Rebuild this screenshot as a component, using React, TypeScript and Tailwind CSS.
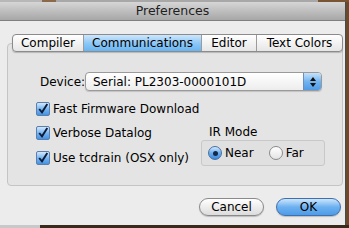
import React from 'react';

const font = { fontFamily: '"DejaVu Sans", "Liberation Sans", sans-serif' };

function Check({ label, className = '' }: { label: string; className?: string }) {
  return (
    <div className={'flex items-center gap-[3px] h-[16px] whitespace-nowrap ' + className}>
      <div className="w-[14px] h-[14px] rounded-[2px] border border-[#5a7fae] bg-gradient-to-b from-[#d2e8fc] via-[#78b6f0] to-[#4592e2] flex items-center justify-center">
        <svg width="12" height="12" viewBox="0 0 12 12">
          <path d="M2.2 6 L5 9.3 L10.3 1" fill="none" stroke="#0e1c38" strokeWidth="1.9" />
        </svg>
      </div>
      <span className="text-[12px] text-black">{label}</span>
    </div>
  );
}

function Radio({ label, on }: { label: string; on?: boolean }) {
  return (
    <div className="flex items-center gap-[3px] whitespace-nowrap">
      <div
        className={
          on
            ? 'w-[14px] h-[14px] rounded-full border border-[#4a6f9e] bg-gradient-to-b from-[#d2e8fc] via-[#6aaeee] to-[#3a8ae0] flex items-center justify-center'
            : 'w-[14px] h-[14px] rounded-full border border-[#8a8a8a] bg-gradient-to-b from-[#ffffff] to-[#e4e4e4]'
        }
      >
        {on && <div className="w-[5px] h-[5px] rounded-full bg-[#152a4a]" />}
      </div>
      <span className="text-[12px] text-black">{label}</span>
    </div>
  );
}

export default function App() {
  const tabs = [
    { name: 'Compiler', w: 'w-[70px]' },
    { name: 'Communications', w: 'w-[118px]' },
    { name: 'Editor', w: 'w-[55px]' },
    { name: 'Text Colors', w: 'w-[86px]' },
  ];
  return (
    <div className="w-[349px] h-[228px] overflow-hidden bg-[#6b4a2c] flex flex-col" style={font}>
      <div className="h-[2px] flex">
        <div className="w-[42px] bg-[#b8b8b8]" />
        <div className="w-[14px] bg-[#8a6a48]" />
        <div className="w-[262px] bg-[#a8a8a8]" />
        <div className="flex-1 bg-[#7a5534]" />
      </div>
      <div className="w-[346px] h-[223px] bg-[#ececec] flex flex-col border-r border-[#4a4a4a]">
        <div className="h-[19px] bg-gradient-to-b from-[#d6d6d6] to-[#a7a7a7] border-b border-[#7f7f7f] flex items-center justify-center">
          <span className="text-[12.5px] text-[#1e1e1e]">Preferences</span>
        </div>
        <div className="relative flex-1 pl-[7px] pr-[2px] pt-[22px]">
          <div className="h-[143px] rounded-[4px] border border-[#c4c4c4] bg-[#e4e4e4] flex flex-col">
            <div className="h-[28px] shrink-0" />
            <div className="flex items-center pl-[32px] h-[19px]">
              <span className="text-[12px] text-black w-[45px]">Device:</span>
              <div className="w-[237px] h-[19px] rounded-[4px] border border-[#9a9a9a] bg-gradient-to-b from-[#ffffff] to-[#ededed] flex items-center justify-between pl-[7px] shadow-[0_1px_1px_rgba(0,0,0,0.15)] overflow-hidden">
                <span className="text-[12px] text-black">Serial: PL2303-0000101D</span>
                <div className="w-[18px] h-[19px] bg-gradient-to-b from-[#d0e7fb] via-[#72b4f0] to-[#4a98e6] border-l border-[#6a8fbd] flex flex-col items-center justify-center gap-[2px]">
                  <svg width="6" height="4" viewBox="0 0 6 4"><path d="M0 4 L3 0 L6 4 Z" fill="#111" /></svg>
                  <svg width="6" height="4" viewBox="0 0 6 4"><path d="M0 0 L3 4 L6 0 Z" fill="#111" /></svg>
                </div>
              </div>
            </div>
            <div className="flex pl-[28px] pt-[10px]">
              <div className="w-[165px] flex flex-col">
                <Check label="Fast Firmware Download" />
                <Check label="Verbose Datalog" className="mt-[8px]" />
                <Check label="Use tcdrain (OSX only)" className="mt-[9px]" />
              </div>
              <div className="pt-[23px] flex flex-col">
                <span className="text-[12px] text-black ml-[8px] h-[16px] leading-[16px]">IR Mode</span>
                <div className="w-[124px] h-[26px] rounded-[3px] border border-[#c8c8c8] bg-[#e0e0e0] flex items-center pl-[6px] gap-[15px]">
                  <Radio label="Near" on />
                  <Radio label="Far" />
                </div>
              </div>
            </div>
          </div>
          <div className="absolute left-[12px] top-[13px] flex h-[18px] rounded-[4px] border border-[#8b8b8b] overflow-hidden bg-gradient-to-b from-[#ffffff] to-[#e6e6e6] shadow-[0_1px_1px_rgba(0,0,0,0.2)]">
            {tabs.map((t, i) => (
              <div
                key={t.name}
                className={
                  (i === 1
                    ? 'bg-gradient-to-b from-[#cde6fb] via-[#8fc8f6] to-[#66b4f2] '
                    : '') +
                  t.w +
                  (i > 0 ? ' border-l border-[#9b9b9b]' : '') +
                  ' flex items-center justify-center text-[12px] text-black whitespace-nowrap'
                }
              >
                {t.name}
              </div>
            ))}
          </div>
          <div className="flex justify-end gap-[12px] pr-[2px] pt-[12px]">
            <div className="w-[65px] h-[18px] rounded-full border border-[#8a8a8a] bg-gradient-to-b from-[#ffffff] to-[#dcdcdc] flex items-center justify-center text-[12px] text-black shadow-[0_1px_1px_rgba(0,0,0,0.2)]">
              Cancel
            </div>
            <div className="w-[65px] h-[18px] rounded-full border border-[#3f6fae] bg-gradient-to-b from-[#cde6fb] via-[#6cb0f0] to-[#4d9ce8] flex items-center justify-center text-[12px] text-black shadow-[0_1px_1px_rgba(0,0,0,0.2)]">
              OK
            </div>
          </div>
        </div>
      </div>
      <div className="flex-1 flex">
        <div className="w-[40px] bg-[#c8c8c8]" />
        <div className="flex-1 bg-[#3a2a1c]" />
      </div>
    </div>
  );
}
